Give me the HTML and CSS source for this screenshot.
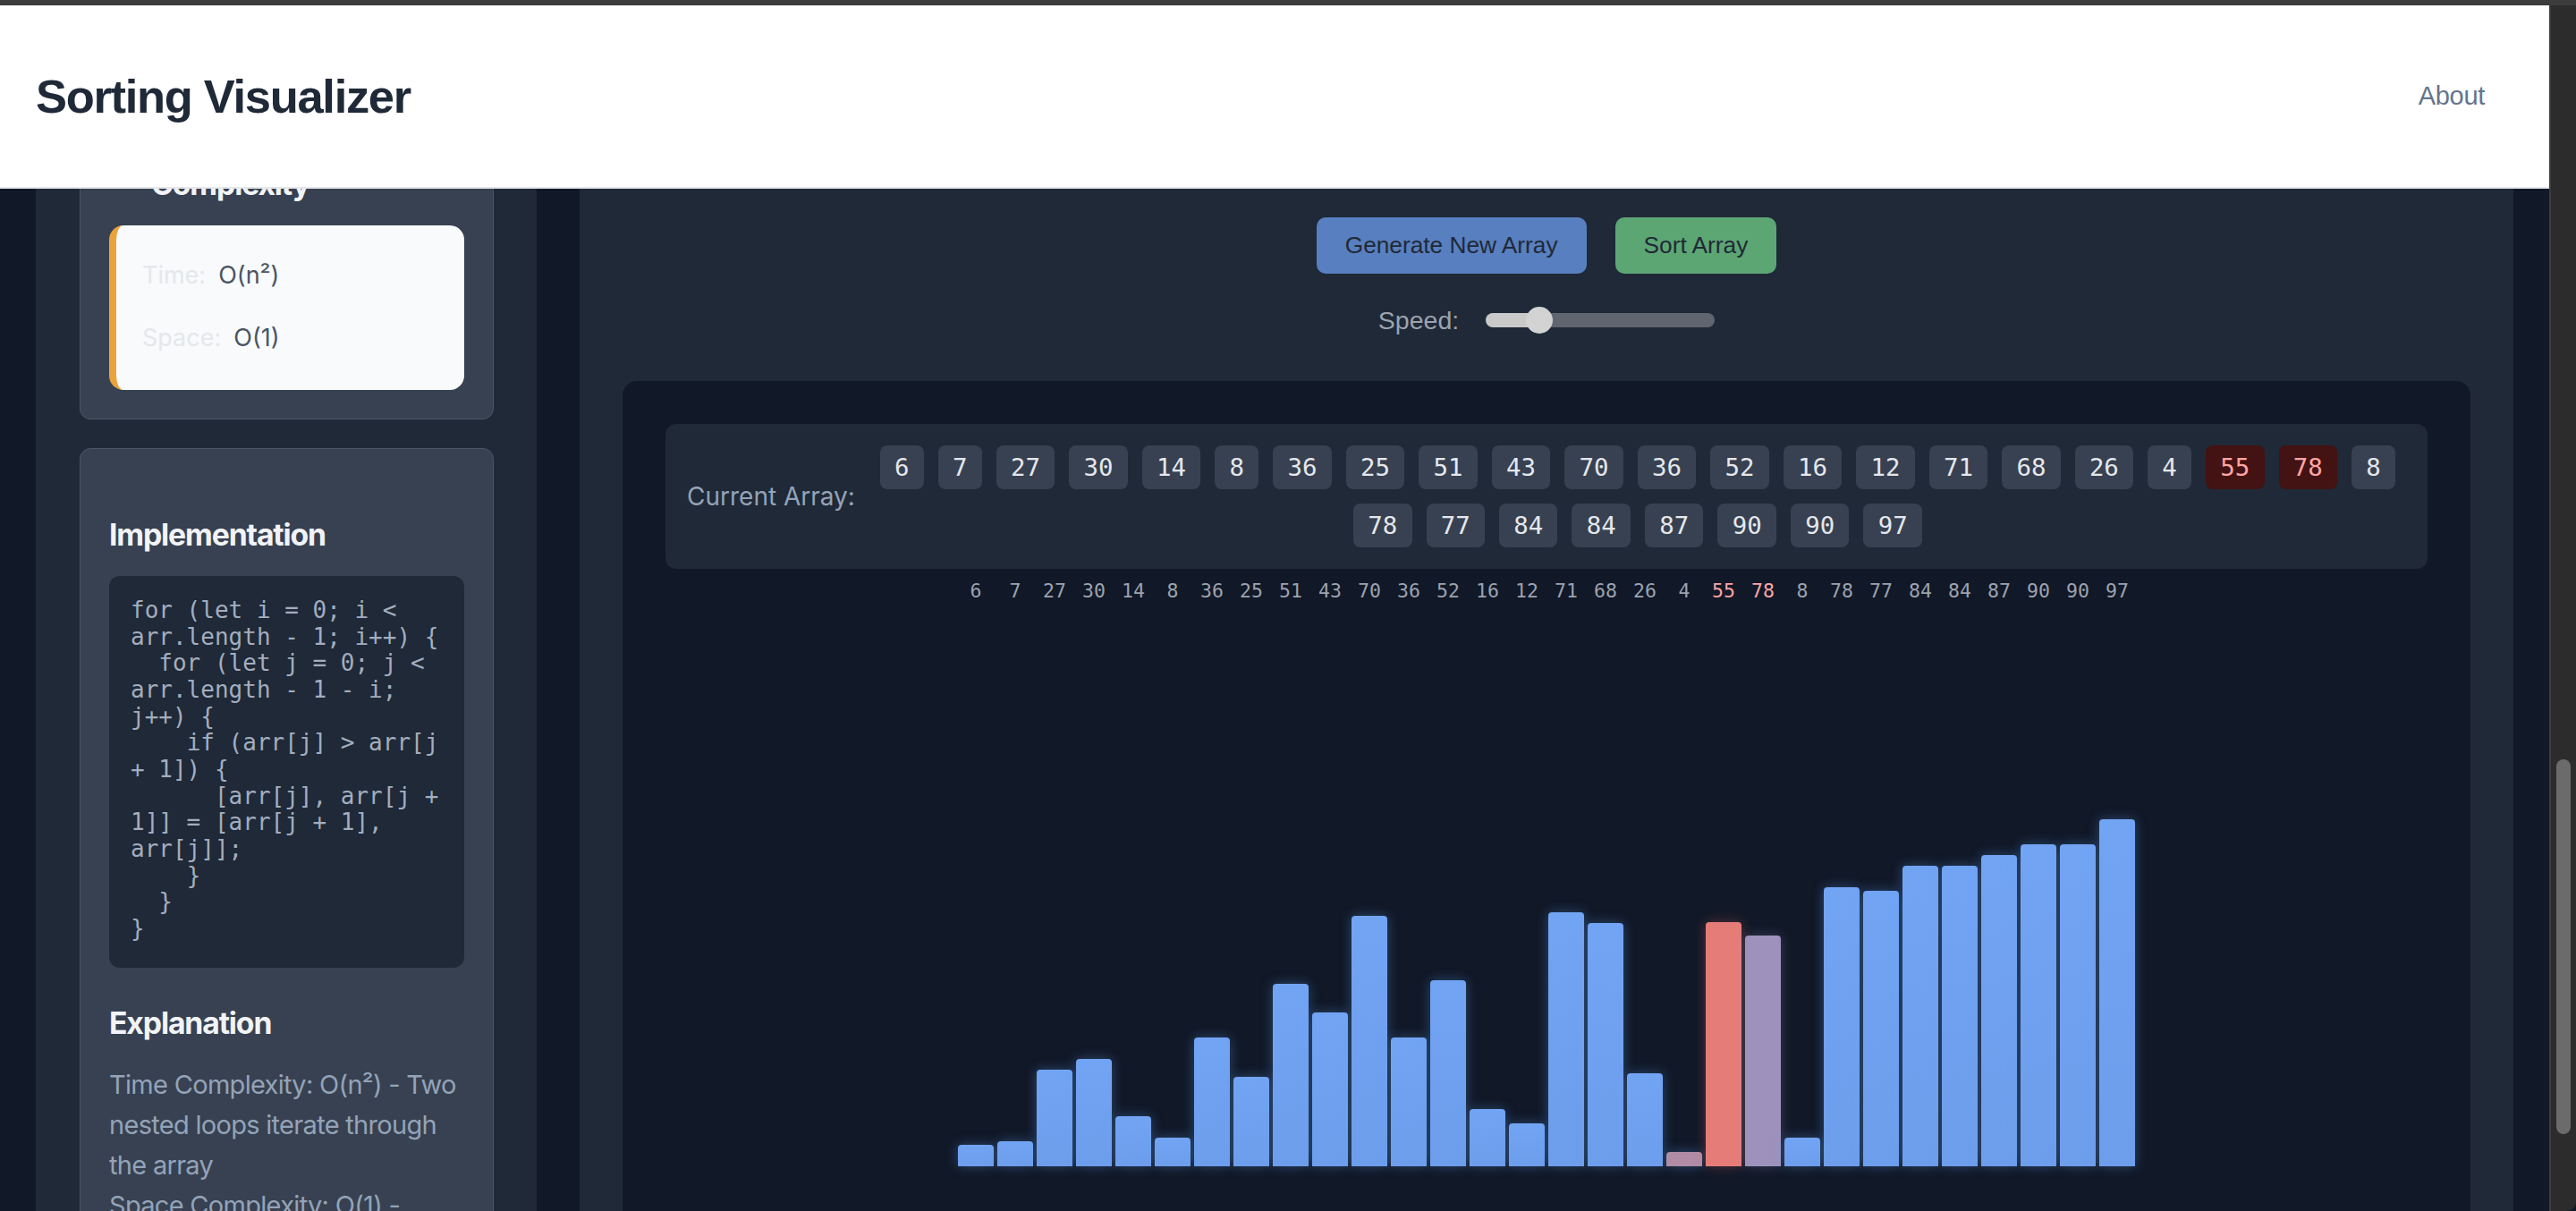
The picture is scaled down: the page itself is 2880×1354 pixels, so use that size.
FILE: index.html
```html
<!DOCTYPE html>
<html lang="en">
<head>
<meta charset="utf-8">
<title>Sorting Visualizer</title>
<link rel="stylesheet" href="styles.css">
</head>
<body>
<div class="chrome-top"></div>
<div class="window">
  <header class="topbar">
    <h1 class="brand">Sorting Visualizer</h1>
    <nav class="nav"><a class="nav-link" href="#about">About</a></nav>
  </header>

  <div class="page">
    <aside class="sidebar">
      <section class="card">
        <h3 class="card-title with-icon">
          <svg class="title-icon" viewBox="0 0 24 24" width="34" height="34" fill="none" stroke="#f3f4f6" stroke-width="2"><circle cx="12" cy="12" r="9"/><path d="M12 7v5l3 3"/></svg>
          <span>Time &amp; Space Complexity</span>
        </h3>
        <div class="complexity">
          <div class="cx-row"><span class="cx-label">Time:</span><span class="cx-value">O(n²)</span></div>
          <div class="cx-row"><span class="cx-label">Space:</span><span class="cx-value">O(1)</span></div>
        </div>
      </section>

      <section class="card card-impl">
        <h3 class="card-title">Implementation</h3>
        <pre class="code"><code>for (let i = 0; i &lt; arr.length - 1; i++) {
  for (let j = 0; j &lt; arr.length - 1 - i; j++) {
    if (arr[j] &gt; arr[j + 1]) {
      [arr[j], arr[j + 1]] = [arr[j + 1], arr[j]];
    }
  }
}</code></pre>
        <h3 class="card-title expl-title">Explanation</h3>
        <p class="expl">Time Complexity: O(n²) - Two nested loops iterate through the array<br>Space Complexity: O(1) - Requires constant extra memory for swapping</p>
      </section>
    </aside>

    <main class="main">
      <div class="intro">
        <h2 class="algo-title">Bubble Sort</h2>
        <p class="algo-sub">Repeatedly swaps adjacent elements that are in the wrong order.</p>
      </div>

      <div class="controls">
        <div class="buttons">
          <button class="btn btn-blue" type="button">Generate New Array</button>
          <button class="btn btn-green" type="button">Sort Array</button>
        </div>
        <div class="speed">
          <label class="speed-label" for="speed">Speed:</label>
          <input id="speed" class="range" type="range" min="0" max="100" value="20">
        </div>
      </div>

      <section class="visualizer">
        <div class="array-box">
          <span class="array-label">Current Array:</span>
          <div class="chips">
            <span class="chip">6</span><span class="chip">7</span><span class="chip">27</span><span class="chip">30</span><span class="chip">14</span><span class="chip">8</span><span class="chip">36</span><span class="chip">25</span><span class="chip">51</span><span class="chip">43</span><span class="chip">70</span><span class="chip">36</span><span class="chip">52</span><span class="chip">16</span><span class="chip">12</span><span class="chip">71</span><span class="chip">68</span><span class="chip">26</span><span class="chip">4</span><span class="chip chip-hot">55</span><span class="chip chip-hot">78</span><span class="chip">8</span><span class="chip">78</span><span class="chip">77</span><span class="chip">84</span><span class="chip">84</span><span class="chip">87</span><span class="chip">90</span><span class="chip">90</span><span class="chip">97</span>
          </div>
        </div>

        <div class="numbers">
          <span>6</span><span>7</span><span>27</span><span>30</span><span>14</span><span>8</span><span>36</span><span>25</span><span>51</span><span>43</span><span>70</span><span>36</span><span>52</span><span>16</span><span>12</span><span>71</span><span>68</span><span>26</span><span>4</span><span class="hot">55</span><span class="hot">78</span><span>8</span><span>78</span><span>77</span><span>84</span><span>84</span><span>87</span><span>90</span><span>90</span><span>97</span>
        </div>

        <div class="bars">
          <div class="bar" style="height:24px"></div>
          <div class="bar" style="height:28px"></div>
          <div class="bar" style="height:108px"></div>
          <div class="bar" style="height:120px"></div>
          <div class="bar" style="height:56px"></div>
          <div class="bar" style="height:32px"></div>
          <div class="bar" style="height:144px"></div>
          <div class="bar" style="height:100px"></div>
          <div class="bar" style="height:204px"></div>
          <div class="bar" style="height:172px"></div>
          <div class="bar" style="height:280px"></div>
          <div class="bar" style="height:144px"></div>
          <div class="bar" style="height:208px"></div>
          <div class="bar" style="height:64px"></div>
          <div class="bar" style="height:48px"></div>
          <div class="bar" style="height:284px"></div>
          <div class="bar" style="height:272px"></div>
          <div class="bar" style="height:104px"></div>
          <div class="bar bar-fade" style="height:16px"></div>
          <div class="bar bar-red" style="height:273px"></div>
          <div class="bar bar-purple" style="height:258px"></div>
          <div class="bar" style="height:32px"></div>
          <div class="bar" style="height:312px"></div>
          <div class="bar" style="height:308px"></div>
          <div class="bar" style="height:336px"></div>
          <div class="bar" style="height:336px"></div>
          <div class="bar" style="height:348px"></div>
          <div class="bar" style="height:360px"></div>
          <div class="bar" style="height:360px"></div>
          <div class="bar" style="height:388px"></div>
        </div>
      </section>
    </main>
  </div>

  <div class="scrollbar"><div class="scroll-thumb"></div></div>
</div>
</body>
</html>
```

FILE: styles.css
```css
* { box-sizing: border-box; }

html, body {
  margin: 0;
  padding: 0;
}

body {
  width: 2880px;
  height: 1354px;
  overflow: hidden;
  background: #111827;
  font-family: "Inter", "Liberation Sans", sans-serif;
}

.chrome-top {
  height: 6px;
  background: #3c3c3c;
}

.window {
  display: flex;
  height: 1348px;
  overflow: hidden;
}

/* fixed site header overlays the scrolled page */
.topbar {
  position: fixed;
  top: 6px;
  left: 0;
  width: 2850px;
  height: 205px;
  z-index: 10;
  background: #ffffff;
  border-bottom: 2px solid #e5e7eb;
  display: flex;
  align-items: center;
  justify-content: space-between;
  padding: 0 48px 0 40px;
}

.brand {
  margin: 0;
  font-family: "Liberation Sans", Arial, sans-serif;
  font-weight: 700;
  font-size: 52.5px;
  letter-spacing: -0.025em;
  color: #1f2937;
}

.nav-link {
  display: block;
  padding: 0 24px;
  font-family: "Liberation Sans", Arial, sans-serif;
  font-size: 29px;
  letter-spacing: -0.3px;
  color: #64748b;
  text-decoration: none;
}

.page {
  flex: 1;
  display: grid;
  grid-template-columns: 560px 1fr;
  gap: 48px;
  padding: 40.5px 40px 0;
  align-items: start;
  overflow: hidden;
}

/* ---------- sidebar ---------- */
.sidebar {
  background: #1f2937;
  padding: 48px 48px 200px 49px;
  display: flex;
  flex-direction: column;
  gap: 32px;
}

.card {
  background: #374151;
  border: 1px solid #4b5563;
  border-radius: 12px;
  padding: 32px;
}

.card-impl {
  padding-top: 70px;
}

.card-title {
  margin: 0 0 19.5px;
  font-family: "Inter", sans-serif;
  font-weight: 700;
  font-size: 33.75px;
  line-height: 52.5px;
  letter-spacing: -1.15px;
  color: #f1f3f6;
}

.with-icon {
  display: flex;
  align-items: flex-start;
  gap: 13px;
}

.title-icon {
  flex: none;
  margin-top: 9px;
}

.complexity {
  background: #f8fafc;
  border-left: 8px solid #eca23a;
  border-radius: 16px;
  padding: 36px 24px 38px 29px;
  display: flex;
  flex-direction: column;
  gap: 30px;
}

.cx-row {
  display: flex;
  gap: 14px;
  font-size: 27px;
  line-height: 40px;
}

.cx-label { color: #e5e7eb; }
.cx-value { color: #4b5563; }

.code {
  margin: 0;
  background: #1f2937;
  border-radius: 12px;
  padding: 24px 24px 28px;
  font-family: "DejaVu Sans Mono", "Liberation Mono", monospace;
  font-size: 26px;
  line-height: 29.66px;
  color: #a3adbf;
  white-space: pre-wrap;
}

.expl-title {
  margin-top: 36.5px;
}

.expl {
  margin: 0;
  font-size: 29px;
  line-height: 45px;
  letter-spacing: -0.7px;
  color: #94a3b8;
}

/* ---------- main ---------- */
.main {
  background: #1f2937;
  border-radius: 12px;
  padding: 48px;
  min-height: 1400px;
}

.intro {
  text-align: center;
  margin-bottom: 31.5px;
}

.algo-title {
  margin: 0 0 12px;
  font-size: 45px;
  line-height: 60px;
  color: #f3f4f6;
}

.algo-sub {
  margin: 0;
  font-size: 30px;
  line-height: 45px;
  color: #9ca3af;
}

.controls {
  display: flex;
  flex-direction: column;
  align-items: center;
}

.buttons {
  display: flex;
  gap: 32px;
}

.btn {
  border: none;
  border-radius: 10px;
  padding: 15px 32px;
  font-family: "Liberation Sans", Arial, sans-serif;
  font-size: 26.25px;
  line-height: 33px;
  color: #1f2937;
  cursor: pointer;
}

.btn-blue { background: #587fbf; }
.btn-green { background: #5ca674; }

.speed {
  margin-top: 37px;
  height: 30px;
  display: flex;
  align-items: center;
  gap: 30px;
}

.speed-label {
  font-family: "Liberation Sans", Arial, sans-serif;
  font-size: 28.5px;
  color: #9ca3af;
}

.range {
  -webkit-appearance: none;
  appearance: none;
  margin: 0;
  width: 256px;
  height: 16px;
  border-radius: 8px;
  background: linear-gradient(to right, #c9c9c9 0 60px, #60656f 60px 100%);
  outline: none;
}

.range::-webkit-slider-thumb {
  -webkit-appearance: none;
  appearance: none;
  width: 30px;
  height: 30px;
  border-radius: 50%;
  background: #d3d3d3;
  border: none;
}

.visualizer {
  margin-top: 53px;
  background: #111827;
  border-radius: 16px;
  padding: 48px;
  min-height: 1000px;
}

.array-box {
  background: #1f2937;
  border-radius: 12px;
  padding: 24px;
  display: flex;
  align-items: center;
  gap: 16px;
}

.array-label {
  flex: none;
  font-size: 28px;
  color: #94a3b8;
  white-space: nowrap;
}

.chips {
  flex: 1;
  display: flex;
  flex-wrap: wrap;
  justify-content: center;
  gap: 16px;
}

.chip {
  background: #374151;
  border-radius: 8px;
  padding: 8px 16.25px;
  font-family: "DejaVu Sans Mono", "Liberation Mono", monospace;
  font-size: 27.4px;
  line-height: 33px;
  color: #e5e7eb;
}

.chip-hot {
  background: #431212;
  color: #fca5a5;
}

.numbers {
  margin-top: 10px;
  display: flex;
  justify-content: center;
  gap: 4px;
  font-family: "DejaVu Sans Mono", "Liberation Mono", monospace;
  font-size: 21.5px;
  line-height: 30px;
  color: #9ca3af;
}

.numbers span {
  width: 40px;
  text-align: center;
}

.numbers .hot { color: #fca5a5; }

.bars {
  height: 628px;
  display: flex;
  justify-content: center;
  align-items: flex-end;
  gap: 4px;
}

.bar {
  width: 40px;
  border-radius: 4px 4px 0 0;
  background: linear-gradient(#72a4f4, #6d9eec);
  box-shadow: 0 0 14px rgba(96, 165, 250, 0.35);
}

.bar-red {
  background: #e67c78;
  box-shadow: 0 0 14px rgba(248, 113, 113, 0.3);
}

.bar-purple {
  background: #9e92bc;
  box-shadow: 0 0 14px rgba(160, 150, 220, 0.3);
}

.bar-fade {
  background: #b08ca6;
}

/* ---------- fake window scrollbar ---------- */
.scrollbar {
  flex: none;
  width: 30px;
  background: #2c2c2c;
  border-left: 2px solid #3d3d3d;
  border-bottom-right-radius: 10px;
}

.scroll-thumb {
  width: 16px;
  height: 419px;
  margin: 843px 0 0 6px;
  border-radius: 8px;
  background: #6b6b6b;
}
```
